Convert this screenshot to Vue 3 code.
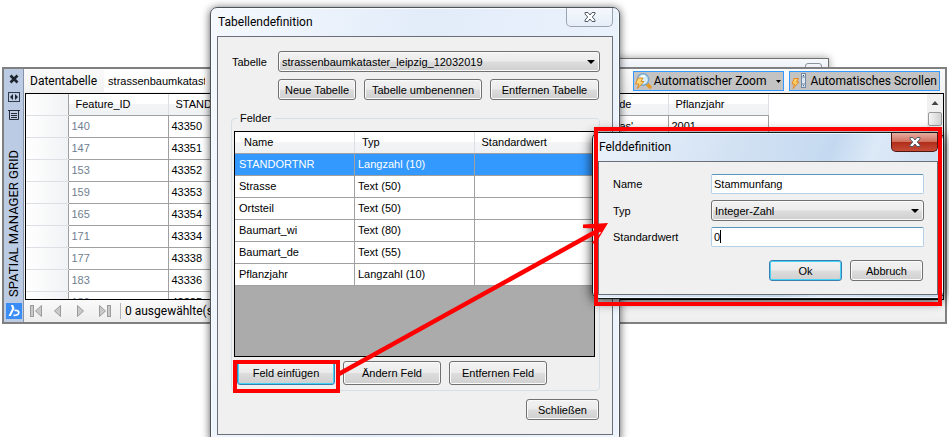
<script setup>
import { ref } from 'vue'

const gridColumns = ['Feature_ID', 'STANDORTNR', 'Strasse', 'Ortsteil', 'Baumart_wi', 'Baumart_de', 'Pflanzjahr']
const gridRows = [
  ['140', '43350'], ['147', '43351'], ['153', '43352'], ['159', '43353'], ['165', '43354'],
  ['171', '43334'], ['177', '43338'], ['183', '43336'], ['189', '43335'],
]
const fields = [
  ['STANDORTNR', 'Langzahl (10)'],
  ['Strasse', 'Text (50)'],
  ['Ortsteil', 'Text (50)'],
  ['Baumart_wi', 'Text (80)'],
  ['Baumart_de', 'Text (55)'],
  ['Pflanzjahr', 'Langzahl (10)'],
]
const selected = ref(0)
const tableName = ref('strassenbaumkataster_leipzig_12032019')
const fieldName = ref('Stammunfang')
const defaultValue = ref('0')
</script>

<template>
  <main class="desktop">
    <div class="back-window"><span class="back-button"></span></div>

    <section class="manager">
      <aside class="side">
        <button class="side-btn" aria-label="Schließen">
          <svg width="12" height="12" viewBox="0 0 12 12"><path d="M2.500 2.500l7 7M9.500 2.500l-7 7" stroke="#1c2430" stroke-width="2.600" /></svg>
        </button>
        <button class="side-btn" aria-label="Automatisch ausblenden">
          <svg width="12" height="12" viewBox="0 0 12 12"><rect x=".5" y="1.500" width="11" height="9" fill="none" stroke="#333b48" /><path d="M5 3v6L2 6zM7 3v6l3-3z" fill="#1c2430" /></svg>
        </button>
        <button class="side-btn" aria-label="Eigenschaften">
          <svg width="12" height="12" viewBox="0 0 12 12"><path d="M0 1.500h12M1.500 2v8.500h9V2M3 4.500h6M3 6.500h6M3 8.500h6" fill="none" stroke="#242c38" /></svg>
        </button>
        <span class="side-title">SPATIAL MANAGER GRID</span>
        <svg class="brand" width="16" height="16" viewBox="0 0 16 16"><rect width="16" height="16" fill="#3a8df5" /><path d="M4.800 2h2.400l1.300 3.500L4.800 13H2.500L6.200 5.500z" fill="#fff" /><path d="M8.500 7.500c2.800-.6 4.300.6 4.300 2.200 0 1.700-1.800 2.600-5.300 2.600" fill="none" stroke="#fff" stroke-width="1.700" /></svg>
      </aside>
      <div class="manager-main">
        <header class="toolbar">
          <label for="data-table">Datentabelle</label>
          <input id="data-table" v-model="tableName" class="table-input" />
          <span class="spacer"></span>
          <button class="tool">
            <svg width="18" height="18" viewBox="0 0 18 18"><path d="M12 11l4 4" stroke="#e79a25" stroke-width="3.500" stroke-linecap="round" /><circle cx="9" cy="7.500" r="5.700" fill="#d2ecfa" stroke="#79a6ca" stroke-width="1.600" /><path d="M7 5.500a3 3 0 0 1 4-1" stroke="#fff" stroke-width="1.500" fill="none" /><path d="M4 6h5L7 9.500h3L3.500 16.500 5 12H1.500z" fill="#fbd878" stroke="#df8d27" /></svg>
            <span class="tool-text">Automatischer Zoom</span>
            <svg class="tool-caret" width="5" height="3" viewBox="0 0 5 3"><path d="M0 0h5L2.500 3z" /></svg>
          </button>
          <button class="tool">
            <svg width="18" height="18" viewBox="0 0 18 18"><rect x="11.500" y="1.500" width="4" height="14" fill="#dfe8f2" stroke="#7188a4" /><path d="M11 5h5M11 12h5" stroke="#7188a4" /><path d="M13 3.500h1M13 13.700h1" stroke="#33475f" /><path d="M4 6.500h4.500L6.500 10H9l-6 6.500L4.500 12H2z" fill="#fbd060" stroke="#e3872a" /></svg>
            <span class="tool-text">Automatisches Scrollen</span>
          </button>
        </header>
        <div class="grid-area">
          <div class="grid-scroll">
            <table class="data-grid">
              <thead>
                <tr><th class="row-head"></th><th v-for="c in gridColumns" :key="c" :class="{ tight: c === 'Baumart_de' }">{{ c }}</th></tr>
              </thead>
              <tbody>
                <tr v-for="(r, i) in gridRows" :key="r[0]">
                  <td class="row-head"></td>
                  <td class="id">{{ r[0] }}</td>
                  <td>{{ r[1] }}</td>
                  <td></td><td></td><td></td>
                  <td class="species">{{ i === 0 ? "as'" : '' }}</td>
                  <td>{{ i === 0 ? '2001' : '' }}</td>
                </tr>
              </tbody>
            </table>
          </div>
          <div class="scrollbar">
            <svg width="16" height="18" viewBox="0 0 16 18"><path d="M4.500 11L8 7l3.500 4z" fill="#444" /></svg>
            <span class="thumb"></span>
          </div>
        </div>
        <footer class="status">
          <svg width="88" height="14" viewBox="0 0 88 14" fill="#c9c9c9" stroke="#9b9b9b">
            <rect x="1.500" y="1.500" width="3" height="11" /><path d="M12.500 1.500v11L6.500 7z" />
            <path d="M31.500 1.500v11L25.500 7z" />
            <path d="M48.500 1.500v11L54.500 7z" />
            <path d="M70.500 1.500v11L76.500 7z" /><rect x="78.500" y="1.500" width="3" height="11" />
          </svg>
          <span class="status-text">0 ausgewählte(s)</span>
        </footer>
      </div>
    </section>

    <section class="dialog definition" aria-label="Tabellendefinition">
      <header class="title">
        <h1>Tabellendefinition</h1>
        <button class="close" aria-label="Schließen">
          <svg width="12" height="10" viewBox="0 0 12 10"><path d="M1 .5h3L6 3l2-2.500h3v1.500L8.300 5 11 8v1.500H8L6 7 4 9.500H1V8l2.700-3L1 2z" fill="#fff" stroke="#525b6b" /></svg>
        </button>
      </header>
      <div class="client">
        <div class="table-form">
          <label for="table-select">Tabelle</label>
          <span class="select">
            <select id="table-select"><option>strassenbaumkataster_leipzig_12032019</option></select>
            <svg width="8" height="4" viewBox="0 0 8 4"><path d="M0 0h8L4 4z" /></svg>
          </span>
          <div class="table-actions">
            <button class="btn">Neue Tabelle</button>
            <button class="btn">Tabelle umbenennen</button>
            <button class="btn">Entfernen Tabelle</button>
          </div>
        </div>
        <fieldset class="group">
          <legend>Felder</legend>
          <div class="field-area">
            <table class="field-grid">
              <thead><tr><th>Name</th><th>Typ</th><th>Standardwert</th></tr></thead>
              <tbody>
                <tr v-for="(f, i) in fields" :key="f[0]" :class="{ selected: i === selected }" @click="selected = i">
                  <td>{{ f[0] }}</td><td>{{ f[1] }}</td><td></td>
                </tr>
              </tbody>
            </table>
          </div>
          <div class="field-actions">
            <span class="marked"><button class="btn primary">Feld einfügen</button></span>
            <button class="btn">Ändern Feld</button>
            <button class="btn">Entfernen Feld</button>
          </div>
        </fieldset>
        <div class="dialog-end"><button class="btn">Schließen</button></div>
      </div>
    </section>

    <section class="dialog field-dialog" aria-label="Felddefinition">
      <header class="title">
        <h1>Felddefinition</h1>
        <button class="close danger" aria-label="Schließen">
          <svg width="12" height="10" viewBox="0 0 12 10"><path d="M1 .5h3L6 3l2-2.500h3v1.500L8.300 5 11 8v1.500H8L6 7 4 9.500H1V8l2.700-3L1 2z" fill="#fff" stroke="#525b6b" /></svg>
        </button>
      </header>
      <div class="client">
        <div class="field-form">
          <label for="f-name">Name</label>
          <input id="f-name" v-model="fieldName" class="text" />
          <label for="f-type">Typ</label>
          <span class="select">
            <select id="f-type"><option>Integer-Zahl</option></select>
            <svg width="8" height="4" viewBox="0 0 8 4"><path d="M0 0h8L4 4z" /></svg>
          </span>
          <label for="f-default">Standardwert</label>
          <span class="caret-wrap">
            <input id="f-default" v-model="defaultValue" class="text active" />
            <i class="caret"></i>
          </span>
        </div>
        <div class="form-end">
          <button class="btn primary">Ok</button>
          <button class="btn">Abbruch</button>
        </div>
      </div>
      <span class="frame"></span>
    </section>

    <svg class="arrow" width="280" height="160" viewBox="0 0 280 160">
      <path d="M1 152L263 7" stroke="#f00" stroke-width="4.500" />
      <path d="M272 0L247 1.500v3.500l12 .5 6 4-9 10 3 2z" fill="#f00" />
    </svg>
  </main>
</template>

<style>
body { margin: 0; background: #fff; }
</style>

<style scoped>
* { box-sizing: border-box; }
.desktop {
  position: relative;
  height: 100vh;
  overflow: hidden;
  background: #fff;
  color: #000;
  font: 11px/14px "Liberation Sans", Arial, sans-serif;
}
button, input, select { font: inherit; color: inherit; margin: 0; }
button { padding: 0; }
svg { display: block; flex: none; }
table { border-collapse: collapse; table-layout: fixed; }

.back-window {
  position: absolute;
  top: 58px;
  left: 600px;
  width: 229px;
  height: 30px;
  padding: 4px 6px 0;
  display: flex;
  justify-content: flex-end;
  background: linear-gradient(#f6f8fb, #d9e4f2);
  border: 1px solid #707070;
  box-shadow: 0 0 8px #0006;
}
.back-button { width: 17px; height: 16px; border: 1px solid #8a929e; border-radius: 3px; }

.manager {
  position: absolute;
  top: 67px;
  left: 2px;
  right: 2px;
  bottom: 113px;
  display: flex;
  border: 2px solid #808080;
  background: #f0f0f0;
}
.side {
  width: 20px;
  display: flex;
  flex-direction: column;
  align-items: center;
  gap: 6px;
  padding: 4px 0 3px;
  background: #bacbe3;
  border-right: 1px solid #8794a8;
}
.side-btn { border: 0; background: none; line-height: 0; }
.side-title {
  margin-top: auto;
  writing-mode: vertical-rl;
  transform: rotate(180deg);
  font: 13px/16px Roboto, "Open Sans", sans-serif;
  white-space: nowrap;
}
.manager-main { flex: 1; min-width: 0; display: flex; flex-direction: column; }
.toolbar {
  height: 24px;
  display: flex;
  align-items: center;
  gap: 5px;
  padding: 0 5px 0 6px;
  background: linear-gradient(#fafafa, #f1f1f1);
  font: 12px/16px Roboto, "Open Sans", sans-serif;
}
.table-input {
  width: 106px;
  height: 22px;
  margin-left: 2px;
  padding: 0 5px 0 4px;
  border: 0;
  background: #fff;
  font: 11px/14px "Liberation Sans", Arial, sans-serif;
}
.spacer { flex: 1; }
.tool {
  height: 20px;
  display: flex;
  align-items: center;
  gap: 2px;
  padding: 0 2px 0 0;
  border: 1px solid #3399ff;
  background: #c3c3c3;
  white-space: nowrap;
}
.tool-caret { margin-left: 8px; }
.grid-area {
  flex: 1;
  min-height: 0;
  display: flex;
  margin: 0 1px 0 1px;
  border: 1px solid #000;
  background: #fff;
}
.grid-scroll { flex: 1; min-width: 0; overflow: hidden; }
.data-grid { width: 742px; }
.data-grid th, .field-grid th {
  height: 21px;
  padding: 0 0 0 7px;
  font-weight: normal;
  text-align: left;
  background: linear-gradient(#fff 50%, #f3f4f6 50%, #f0f1f3);
  border-right: 1px solid #dcdfe4;
  border-bottom: 1px solid #a0a0a0;
}
.data-grid td, .field-grid td {
  height: 22px;
  padding: 0 0 0 3px;
  border: 1px solid #a0a0a0;
  white-space: nowrap;
}
.data-grid th { width: 100px; }
.data-grid th.tight { padding-left: 3px; }
.data-grid .row-head {
  width: 42px;
  border-left: 0;
  border-right-color: #a0a0a0;
  border-bottom-color: #dcdfe4;
  background: linear-gradient(90deg, #fff, #f1f2f4);
}
.data-grid td.id { color: #708090; }
.data-grid td.species { padding-left: 51px; }
.scrollbar { width: 16px; background: #f0f0f0; }
.thumb {
  display: block;
  height: 14px;
  margin: 0 1px;
  border: 1px solid #999;
  border-radius: 2px;
  background: linear-gradient(90deg, #f5f5f5, #d0d0d0);
}
.status {
  height: 22px;
  display: flex;
  align-items: center;
  padding-left: 5px;
  background: linear-gradient(#fafafa, #ededed);
}
.status-text {
  margin-left: 3px;
  padding-left: 4px;
  border-left: 1px solid #b5b5b5;
  font: 12px/16px Roboto, "Open Sans", sans-serif;
}

.dialog {
  position: absolute;
  display: flex;
  flex-direction: column;
  border: 1px solid #4c535d;
  border-radius: 7px;
  background: #e6effa;
  box-shadow: inset 0 0 0 1px #fafdff, 0 1px 9px #000a;
}
.definition {
  top: 7px;
  left: 210px;
  width: 410px;
  padding: 0 6px 7px;
  background: linear-gradient(100deg, #f5f9fe, #e2ecf9 45%, #edf4fd);
}
.title { display: flex; justify-content: space-between; align-items: flex-start; height: 28px; }
.title h1 {
  margin: 0;
  padding: 6px 0 0 1px;
  font: 12px/16px Roboto, "Open Sans", sans-serif;
}
.close {
  width: 47px;
  height: 19px;
  display: flex;
  align-items: center;
  justify-content: center;
  border: 1px solid #9aa3b0;
  border-top: 0;
  border-radius: 0 0 5px 5px;
  background: linear-gradient(#f5f8fd, #e7eef9);
}
.close.danger {
  border-color: #4d1712;
  background: linear-gradient(#e6aca0, #d0705e 48%, #b02c18 50%, #c64c38);
}
.client { border: 1px solid #6b7078; background: #f0f0f0; }
.definition .client { padding: 14px 12px 14px 13px; }
.table-form { display: grid; grid-template-columns: 47px 1fr; row-gap: 7px; align-items: center; }
.table-form label { padding-left: 1px; }
.table-actions { grid-column: 2; display: grid; grid-template-columns: 78fr 118fr 109fr; gap: 8px; margin-right: 1px; }
.select { position: relative; display: flex; }
.select select {
  width: 100%;
  height: 21px;
  padding: 0 20px 0 3px;
  appearance: none;
  border: 1px solid #707070;
  border-radius: 3px;
  background: linear-gradient(#f2f2f2, #ebebeb 49%, #dddddd 51%, #cfcfcf);
  box-shadow: inset 0 0 0 1px #fafafa;
}
.select svg { position: absolute; right: 5px; top: 9px; pointer-events: none; }
.btn {
  height: 21px;
  border: 1px solid #707070;
  border-radius: 3px;
  background: linear-gradient(#f2f2f2, #ebebeb 49%, #dddddd 51%, #cfcfcf);
  box-shadow: inset 0 0 0 1px #fafafa;
  white-space: nowrap;
}
.btn.primary { border-color: #3c7fb1; box-shadow: inset 0 0 0 1px #45d3fa; }
.group {
  min-width: 0;
  margin: 11px 0 0;
  padding: 6px 4px 5px 2px;
  border: 1px solid #d5dfe5;
  border-radius: 4px;
}
.group legend { margin-left: 3px; padding: 0 3px; }
.field-area { height: 226px; border: 1px solid #000; background: #ababab; }
.field-grid { width: 100%; background: #fff; }
.field-grid th { padding-left: 9px; }
.field-grid th:nth-child(n + 2) { padding-left: 7px; }
.field-grid td:first-child { border-left: 0; padding-left: 4px; }
.field-grid td:last-child { border-right: 0; }
.selected td { background: #3399ff; color: #fff; }
.field-actions { display: grid; grid-template-columns: repeat(3, 98px); gap: 8px; padding: 4px 0 0 3px; }
.field-actions .btn { width: 98px; height: 24px; }
.marked { position: relative; }
.marked::after {
  content: "";
  position: absolute;
  inset: -1px -5px -8px -4px;
  border: 4px solid #f00;
  pointer-events: none;
}
.dialog-end { display: flex; justify-content: flex-end; padding: 8px 1px 0 0; }
.dialog-end .btn { width: 73px; }

.field-dialog {
  top: 132px;
  left: 592px;
  width: 352px;
  padding: 0 5px 3px;
  border-color: #151515;
  background: linear-gradient(110deg, #eaf2fb, #d3e2f3 35%, #c4d9f0 60%, #dce9f7 70%, #c3d7ee);
  box-shadow: inset 0 0 0 1px #f0f8ff, 0 2px 12px #000d;
}
.field-dialog .client { padding: 12px 13px 13px 14px; }
.field-form { display: grid; grid-template-columns: 98px 1fr; row-gap: 6px; align-items: center; }
.text {
  width: 100%;
  height: 20px;
  padding: 0 3px 0 2px;
  border: 1px solid #b5cfe7;
  border-top-color: #5794bf;
  border-radius: 2px;
  background: #fff;
  outline: none;
}
.caret-wrap { position: relative; display: flex; }
.caret { position: absolute; left: 9px; top: 3px; width: 1px; height: 13px; background: #000; }
.form-end { display: flex; justify-content: flex-end; gap: 8px; padding: 13px 1px 0 0; }
.form-end .btn { width: 73px; }
.frame { position: absolute; inset: -6px 1px -8px 1px; border: 4px solid #f00; pointer-events: none; }
.arrow { position: absolute; left: 336px; top: 223px; pointer-events: none; }
</style>
